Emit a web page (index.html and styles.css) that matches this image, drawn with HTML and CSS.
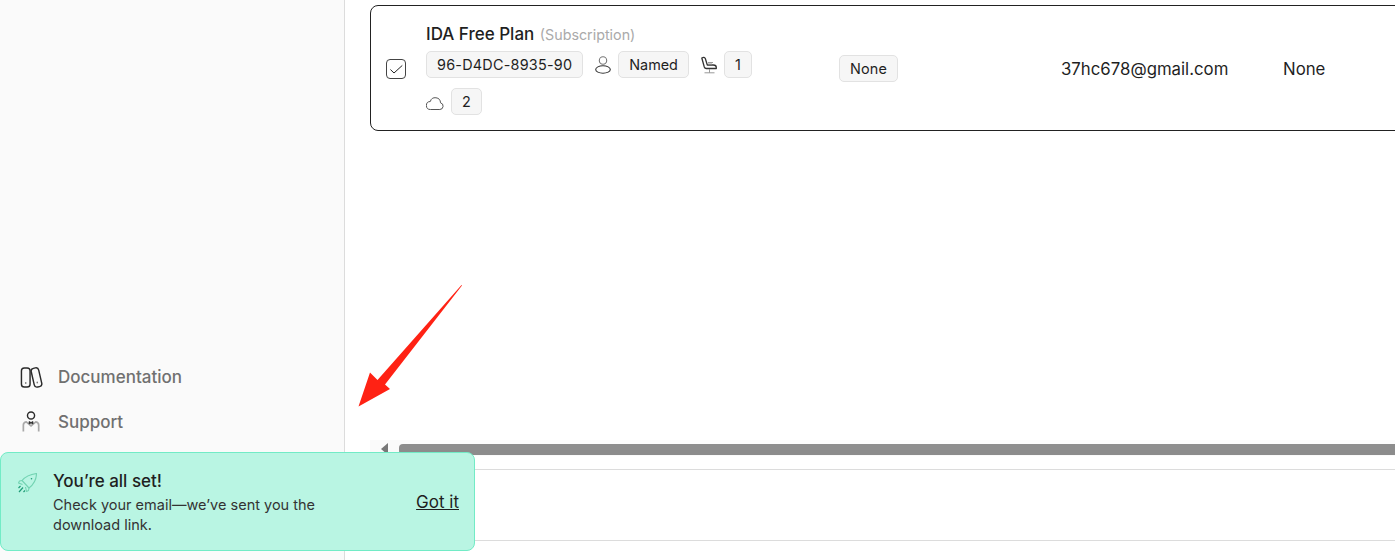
FILE: index.html
```html
<!DOCTYPE html>
<html lang="en">
<head>
    <meta charset="UTF-8">
    <title>Licenses</title>
    <link rel="stylesheet" href="styles.css">
</head>

<body>
    <!--sidebar-->
    <aside class="side">
        <a class="side-link" href="#">
            <svg class="side-ico" viewBox="0 0 24 24" fill="none" stroke="#2a2a2a" stroke-width="1.500" stroke-linejoin="round">
                <rect x="1.500" y="2" width="9" height="20" rx="3"/>
                <rect x="13.200" y="2" width="8" height="20" rx="3" transform="rotate(-13 17 12)"/>
                <path d="M6 17.500v.5M18 17v.5" stroke="#777" stroke-linecap="round"/>
            </svg>
            Documentation
        </a>
        <a class="side-link" href="#">
            <svg class="side-ico" viewBox="0 0 24 24" fill="none" stroke-width="1.500">
                <circle cx="11.500" cy="4.700" r="3.700" stroke="#2a2a2a"/>
                <path d="M3.500 21.500v-7q0-2.500 3-3.200l5 4.200 5-4.200q3 .7 3 3.200v7" stroke="#a9a9a9" stroke-width="1.800"/>
                <path d="M9.500 11l2 1 2-1v2.500l-2-1-2 1z" fill="#2a2a2a" stroke="#2a2a2a" stroke-width=".8"/>
            </svg>
            Support
        </a>
    </aside>

    <!--main-->
    <main class="main">
        <section class="card">
            <span class="check">
                <svg viewBox="0 0 18 18" fill="none" stroke="#222" stroke-width="1" stroke-linecap="round" stroke-linejoin="round">
                    <path d="M3.700 9.800L7 13l8-7.300"/>
                </svg>
            </span>
            <div class="product">
                <h2 class="plan">IDA Free Plan <span class="plan-type">(Subscription)</span></h2>
                <div class="tags">
                    <span class="tag tag-key">96-D4DC-8935-90</span>
                    <span class="tag-group">
                        <svg class="tag-ico" viewBox="0 0 16 18" fill="none" stroke="#333" stroke-width="1.100">
                            <circle cx="8" cy="4.500" r="3.700" stroke="#777"/>
                            <ellipse cx="8" cy="13.500" rx="7.300" ry="3.700"/>
                        </svg>
                        <span class="tag">Named</span>
                    </span>
                    <span class="tag-group">
                        <svg class="tag-ico" viewBox="0 0 16 18" fill="none" stroke="#333" stroke-width="1.300" stroke-linejoin="round">
                            <path d="M.8 2q2.500-1.500 3.500.5l2 6.500h6q3 0 3 2.500v1H5.300q-1.500 0-2-1.500z"/>
                            <path d="M7 6.500h5M7 8h4M3.500 16.800h10M8.500 13v3.800" stroke="#999" stroke-width="1"/>
                        </svg>
                        <span class="tag">1</span>
                    </span>
                    <span class="tag-group">
                        <svg class="tag-ico tag-ico-cloud" viewBox="0 0 18 18" fill="none" stroke="#555" stroke-width="1">
                            <path d="M4.500 16.500h9.300a3.400 3.400 0 0 0 .7-6.700A5.200 5.200 0 0 0 4.300 8.500a4 4 0 0 0 .2 8z"/>
                        </svg>
                        <span class="tag">2</span>
                    </span>
                </div>
            </div>
            <div class="cell"><span class="tag tag-none">None</span></div>
            <div class="cell">37hc678@gmail.com</div>
            <div class="cell">None</div>
        </section>

        <div class="hscroll">
            <span class="hscroll-arrow"></span>
            <span class="hscroll-thumb"></span>
        </div>
        <div class="foot-row"></div>
    </main>

    <!--red arrow over the page-->
    <svg class="arrow" width="1395" height="560" viewBox="0 0 1395 560">
        <path d="M358.500 406.500L370 372.500 377.500 380 461.500 285 462 285.500 385 384.500 390 389z" fill="#ff2214"/>
    </svg>

    <!--toast-->
    <div class="toast">
        <svg class="toast-ico" viewBox="0 0 20 20" fill="none" stroke="#72d3b2" stroke-width="1.100" stroke-linejoin="round">
            <path d="M5 7.500Q10 1.800 19.500.5 19.500 9 12 15z"/>
            <path d="M5 7.500l-2.500.5-1 2 4 1.500M12 15l-.5 2.500-2 1-1-4.500"/>
            <circle cx="14.500" cy="5.800" r=".8" fill="#1f9d78" stroke="none"/>
            <path d="M3.500 13l-2 2M6 14.500l-4 4.500M8 17.500l-1.500 1.500" stroke="#1f9d78" stroke-width="1.200"/>
        </svg>
        <div class="toast-body">
            <strong class="toast-tit">You’re all set!</strong>
            <p class="toast-txt">Check your email—we’ve sent you the download link.</p>
        </div>
        <a class="toast-btn" href="#">Got it</a>
    </div>
</body></html>
```

FILE: styles.css
```css
html,
body,
h2,
p {
    margin: 0;
    padding: 0;
}

body {
    display: flex;
    width: 1395px;
    height: 560px;
    overflow: hidden;
    position: relative;
    background-color: #fff;
    color: #1f1f1f;
    font-family: Inter, "Liberation Sans", sans-serif;
}

/*sidebar*/
.side {
    display: flex;
    flex-direction: column;
    justify-content: flex-end;
    gap: 21px;
    flex: none;
    width: 345px;
    padding: 0 0 126px 20px;
    box-sizing: border-box;
    background-color: #fafafa;
    border-right: 1px solid #dcdcdc;
}

.side-link {
    display: flex;
    align-items: center;
    gap: 15px;
    height: 24px;
    color: #707070;
    font-size: 17px;
    font-weight: 500;
    text-decoration: none;
}

.side-ico {
    width: 23px;
    height: 23px;
}

/*main*/
.main {
    flex: 1;
    min-width: 0;
    padding-top: 5px;
}

/*license card, wider than the window*/
.card {
    display: grid;
    grid-template-columns: 40px 413px 222px 222px 1fr;
    align-items: center;
    width: 1100px;
    height: 126px;
    margin-left: 25px;
    padding: 2px 0 0 15px;
    box-sizing: border-box;
    border: 1px solid #222;
    border-radius: 8px;
    font-size: 16.800px;
}

.check {
    display: block;
    width: 20px;
    height: 20px;
    box-sizing: border-box;
    border: 1px solid #444;
    border-radius: 4px;
}

.check svg {
    display: block;
    width: 18px;
    height: 18px;
}

.plan {
    padding-top: 1px;
    font-size: 17px;
    font-weight: 500;
    line-height: 20px;
    margin-bottom: 6px;
}

.plan-type {
    margin-left: 1px;
    font-size: 14.300px;
    font-weight: 400;
    color: #aaa;
}

.tags {
    display: flex;
    flex-wrap: wrap;
    gap: 10px 12px;
    width: 340px;
}

.tag-group {
    display: flex;
    align-items: center;
    gap: 7px;
}

.tag-ico {
    width: 16px;
    height: 18px;
}

.tag-ico-cloud {
    width: 18px;
}

.tag {
    display: inline-block;
    height: 27px;
    padding: 0 10px;
    box-sizing: border-box;
    border: 1px solid #e2e2e2;
    border-radius: 5px;
    background-color: #f6f6f6;
    font-size: 14.400px;
    line-height: 25px;
}

.tag-key {
    letter-spacing: .23px;
}

.tag-none {
    vertical-align: top;
    margin-top: -1px;
    letter-spacing: .2px;
}

/*scrollbar*/
.hscroll {
    display: flex;
    align-items: flex-start;
    height: 16px;
    margin: 309px 0 13px 25px;
    background-color: #fafafa;
}

.hscroll-arrow {
    width: 0;
    height: 0;
    margin: 3px 0 0 11px;
    border-style: solid;
    border-width: 6px 7px 6px 0;
    border-color: transparent #777 transparent transparent;
}

.hscroll-thumb {
    flex: 1;
    height: 11px;
    margin: 4px 0 0 11px;
    border-radius: 4px 0 0 4px;
    background-color: #8c8c8c;
}

.foot-row {
    height: 70px;
    border-top: 1px solid #dcdcdc;
    border-bottom: 1px solid #dcdcdc;
}

/*arrow*/
.arrow {
    position: absolute;
    top: 0;
    left: 0;
    pointer-events: none;
}

/*toast*/
.toast {
    position: absolute;
    top: 452px;
    left: 0;
    display: flex;
    align-items: center;
    width: 475px;
    height: 99px;
    box-sizing: border-box;
    padding: 0 15px 0 16px;
    border: 1px solid #72ebc6;
    border-radius: 8px;
    background-color: #b9f5e3;
}

.toast-ico {
    align-self: flex-start;
    width: 20px;
    height: 20px;
    margin-top: 20px;
}

.toast-body {
    width: 290px;
    margin: 2px 0 0 16px;
}

.toast-tit {
    display: block;
    font-size: 17px;
    font-weight: 500;
    line-height: 22px;
    margin-bottom: 3px;
}

.toast-txt {
    font-size: 14.500px;
    line-height: 20px;
    color: #333;
}

.toast-btn {
    margin-left: auto;
    color: #1f1f1f;
    font-size: 17px;
}
```
